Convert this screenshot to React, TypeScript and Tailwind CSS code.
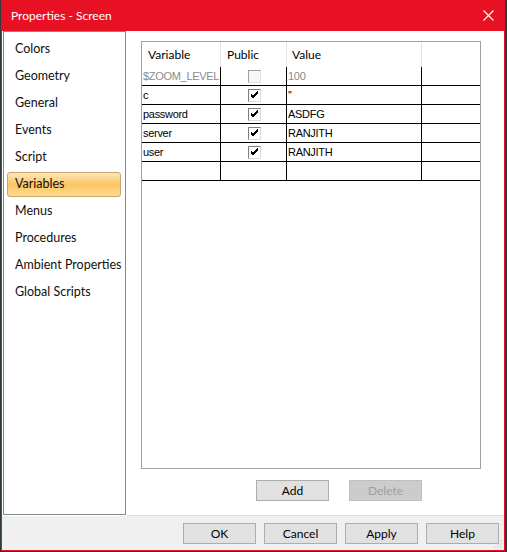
import React from "react";

const navItems = [
  "Colors",
  "Geometry",
  "General",
  "Events",
  "Script",
  "Variables",
  "Menus",
  "Procedures",
  "Ambient Properties",
  "Global Scripts",
];

const rows = [
  { name: "$ZOOM_LEVEL", pub: false, value: "100", dim: true },
  { name: "c", pub: true, value: "''" },
  { name: "password", pub: true, value: "ASDFG" },
  { name: "server", pub: true, value: "RANJITH" },
  { name: "user", pub: true, value: "RANJITH" },
  { name: "", pub: null, value: "" },
];

function Check({ checked, disabled }: { checked: boolean; disabled?: boolean }) {
  return (
    <div
      className={`w-[13px] h-[13px] border ${
        disabled
          ? "border-t-[#a0a0a0] border-l-[#a0a0a0] border-b-[#e3e3e3] border-r-[#e3e3e3] bg-[#f7f7f7]"
          : "border-t-[#808080] border-l-[#808080] border-b-[#dcdcdc] border-r-[#dcdcdc] bg-white"
      }`}
    >
      {checked && (
        <svg width="11" height="11" viewBox="0 0 11 11">
          <path d="M2 5 L4 7 L9 2 M2 6 L4 8 L9 3 M2 4 L4 6 L9 1" stroke="#000" strokeWidth="1" fill="none" />
        </svg>
      )}
    </div>
  );
}

function Btn({ label, disabled }: { label: string; disabled?: boolean }) {
  return (
    <div
      className={`w-[73px] h-[21px] flex items-center justify-center border text-[12px] ${
        disabled
          ? "bg-[#cccccc] border-[#bfbfbf] text-[#a0a0a0]"
          : "bg-[#e1e1e1] border-[#adadad] text-black"
      }`}
    >
      {label}
    </div>
  );
}

export default function App() {
  const ui = { fontFamily: 'Lato, "Noto Sans", sans-serif' };
  const grid = { fontFamily: '"Liberation Sans", Arial, sans-serif' };

  return (
    <div className="w-[507px] h-[552px] bg-[#2f3a3c] pl-px" style={ui}>
      <div className="relative w-[504px] h-[551px] border border-t-0 border-[#e81123] bg-[#f0f0f0] flex flex-col">
        {/* title bar */}
        <div className="h-[31px] -mx-px bg-[#e81123] flex items-center justify-between pl-[10px] pr-[10px] shrink-0">
          <span className="text-white text-[12px]">Properties - Screen</span>
          <svg width="11" height="11" viewBox="0 0 11 11" className="mr-[1px]">
            <path d="M0.5 0.5 L10.5 10.5 M10.5 0.5 L0.5 10.5" stroke="#fff" strokeWidth="1.1" />
          </svg>
        </div>

        {/* body */}
        <div className="flex h-[485px] shrink-0 bg-white">
          <div className="ml-px w-[123px] h-[484px] border border-[#828790] bg-white pt-[4px]">
            {navItems.map((it) => (
              <div key={it} className="h-[27px] pl-[3px] pr-[4px] py-px">
                <div
                  className={`h-[25px] flex items-center pl-[7px] text-[12.5px] text-[#101010] whitespace-nowrap rounded-[3px] border ${
                    it === "Variables"
                      ? "border-[#c9a46c] bg-gradient-to-b from-[#fde7b6] via-[#fcc564] to-[#fddb8e]"
                      : "border-transparent"
                  }`}
                >
                  {it}
                </div>
              </div>
            ))}
          </div>

          <div className="flex-1 ml-px bg-white border-b border-[#dadada] pl-[14px] pt-[10px] flex flex-col">
            <div className="w-[340px] h-[428px] border border-[#a0a0a0] bg-white text-[11px] tracking-[-0.3px]" style={grid}>
              {/* header */}
              <div className="grid grid-cols-[79px_66px_135px_1fr] h-[25px] tracking-normal" style={ui}>
                <div className="border-r border-[#e5e5e5] flex items-center pl-[6px] text-[12px]">Variable</div>
                <div className="border-r border-[#e5e5e5] flex items-center pl-[6px] text-[12px]">Public</div>
                <div className="border-r border-[#e5e5e5] flex items-center pl-[5px] text-[12px]">Value</div>
                <div />
              </div>
              {rows.map((r, i) => (
                <div key={i} className="grid grid-cols-[79px_66px_135px_1fr] h-[19px] border-b border-black">
                  <div className={`border-r border-black flex items-center pl-px pt-px leading-none whitespace-nowrap overflow-hidden ${r.dim ? "text-[#8a8a8a]" : "text-black"}`}>
                    {r.name}
                  </div>
                  <div className="border-r border-black flex items-center justify-center pl-px">
                    {r.pub !== null && <Check checked={!!r.pub} disabled={r.dim} />}
                  </div>
                  <div className={`border-r border-black flex items-center pl-px pt-px leading-none ${r.dim ? "text-[#8a8a8a]" : "text-black"}`}>
                    {r.value}
                  </div>
                  <div />
                </div>
              ))}
            </div>
            <div className="flex mt-[11px] ml-[115px] gap-[20px]">
              <Btn label="Add" />
              <Btn label="Delete" disabled />
            </div>
          </div>
        </div>

        {/* footer */}
        <div className="flex justify-end gap-[8px] pr-[5px] pt-[7px]">
          <Btn label="OK" />
          <Btn label="Cancel" />
          <Btn label="Apply" />
          <Btn label="Help" />
        </div>

        <svg width="11" height="11" viewBox="0 0 11 11" className="absolute right-[1px] bottom-[1px]">
          <path d="M10 2 L2 10 M10 5 L5 10 M10 8 L8 10" stroke="#bdbdbd" strokeWidth="1" strokeDasharray="1 1" />
        </svg>
      </div>
    </div>
  );
}
